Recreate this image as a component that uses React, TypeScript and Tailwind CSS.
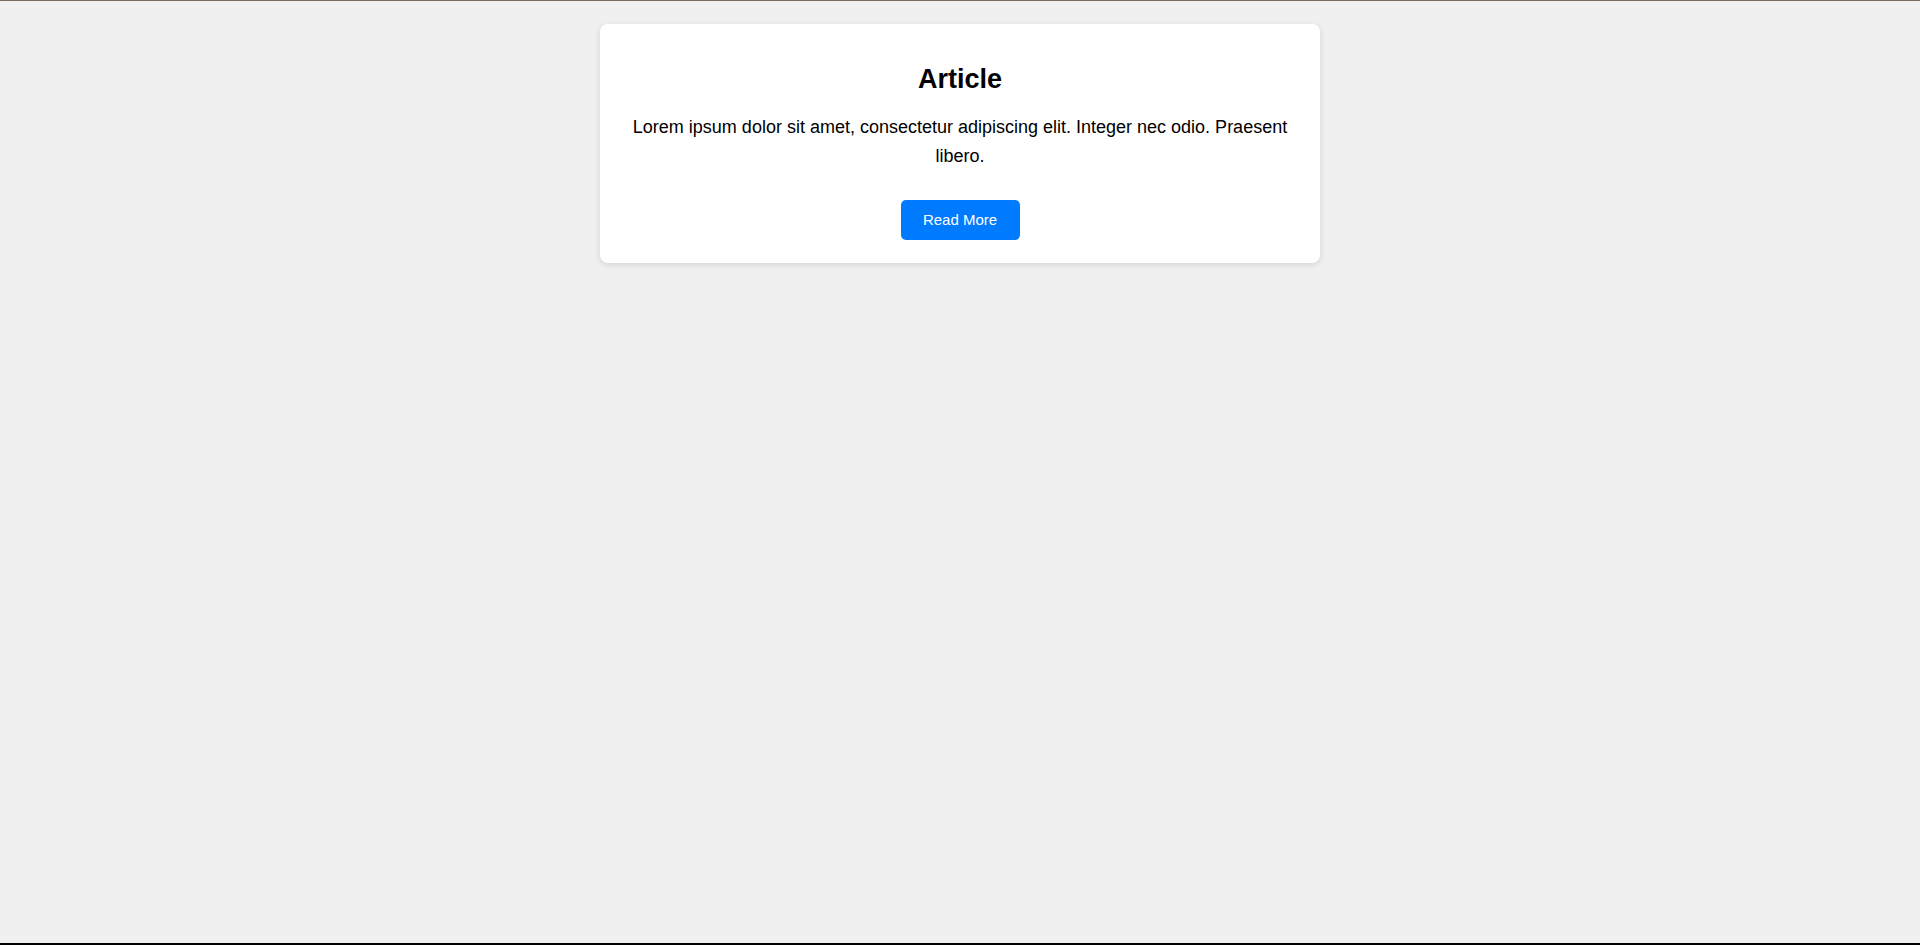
export default function App() {
  return (
    <div className="min-h-[945px] flex flex-col bg-[#f0f0f0] font-['Liberation_Sans',Arial,sans-serif] text-[18px] text-black">
      <div className="h-px bg-[#7a6a62]" />
      <div className="flex-1 flex justify-center items-start pt-[23px]">
        {/* Article card */}
        <div className="w-[720px] bg-white rounded-[8px] shadow-[0_2px_6px_rgba(0,0,0,0.12)] px-[30px] pt-[39px] pb-[23px] text-center">
          <h2 className="text-[27px] font-bold leading-[32px]">Article</h2>
          <p className="mt-[18px] leading-[29px]">
            Lorem ipsum dolor sit amet, consectetur adipiscing elit. Integer nec odio. Praesent libero.
          </p>
          <button className="mt-[29px] w-[119px] h-[40px] bg-[#007bff] text-white text-[15px] rounded-[5px]">
            Read More
          </button>
        </div>
      </div>
      <div className="h-[2px] bg-black" />
    </div>
  );
}
